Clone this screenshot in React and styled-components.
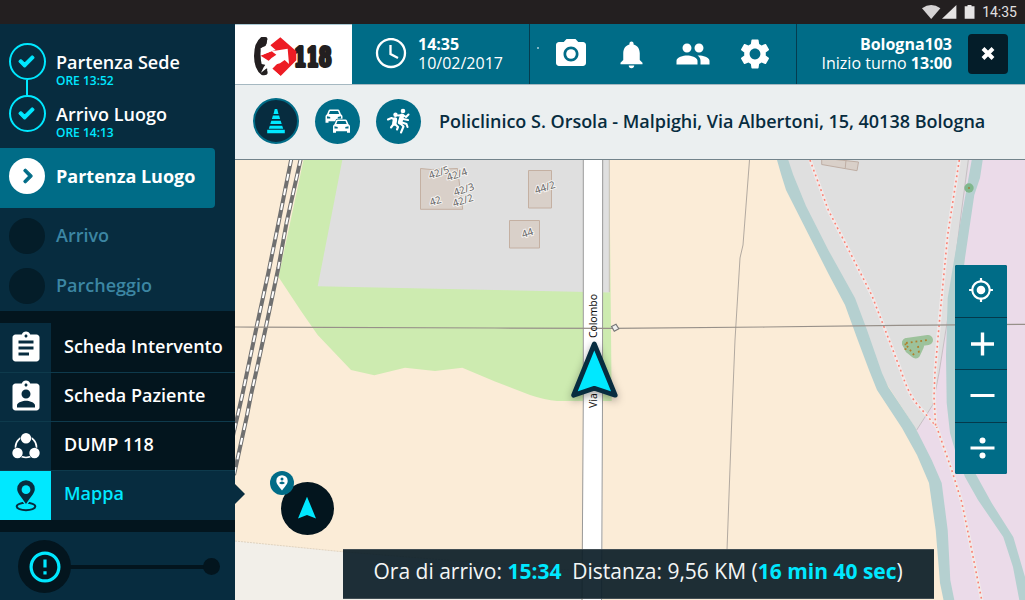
import React from "react";
import styled, { createGlobalStyle, css } from "styled-components";
import {
  MdAssignment,
  MdAssignmentInd,
  MdCameraAlt,
  MdNotifications,
  MdPeople,
  MdSettings,
  MdMyLocation,
} from "react-icons/md";
import { FaCheck, FaChevronRight } from "react-icons/fa";

const c = {
  navy: "#072c3f",
  black: "#03151e",
  deep: "#041d29",
  teal: "#006c87",
  cyan: "#00e8ff",
  dim: "#3c86a3",
  line: "#0e3a4c",
};

const GlobalStyle = createGlobalStyle`
  * { box-sizing: border-box; }
  body { margin: 0; overflow: hidden; font-family: "Open Sans", "Noto Sans", sans-serif; }
  svg { display: block; flex: none; }
`;

const Screen = styled.div`
  width: 1025px;
  height: 600px;
  display: flex;
  flex-direction: column;
  overflow: hidden;
`;

const StatusBar = styled.div`
  flex: none;
  height: 24px;
  background: #231f20;
  display: flex;
  justify-content: flex-end;
  align-items: center;
  padding-right: 8px;
  gap: 7px;
  color: #e2e0e0;
  font: 14px/24px Roboto, sans-serif;
`;

const Body = styled.div`
  flex: 1;
  min-height: 0;
  display: flex;
`;

/* ---------- sidebar ---------- */

const Sidebar = styled.aside`
  position: relative;
  z-index: 2;
  width: 235px;
  flex: none;
  display: flex;
  flex-direction: column;
  background: ${c.black};
`;

const Steps = styled.div`
  height: 287px;
  padding-top: 19px;
  background: ${c.navy};
  display: flex;
  flex-direction: column;
`;

const Step = styled.div`
  display: flex;
  height: ${(p) => p.$h}px;
  width: 215px;
  padding-left: 8px;
  gap: ${(p) => (p.$done ? 10 : 11)}px;
  align-items: ${(p) => (p.$done ? "flex-start" : "center")};
  ${(p) => !p.$done && css`padding-left: 9px;`}
  ${(p) =>
    p.$active &&
    css`
      margin-top: 1px;
      padding-bottom: 4px;
      background: ${c.teal};
      border-radius: 0 4px 4px 0;
    `}
`;

const DoneTrack = styled.div`
  display: flex;
  flex-direction: column;
  align-items: center;
  width: 38px;
`;

const StepDot = styled.div`
  width: ${(p) => (p.$kind === "done" ? 37 : 36)}px;
  height: ${(p) => (p.$kind === "done" ? 37 : 36)}px;
  border-radius: 50%;
  display: flex;
  align-items: center;
  justify-content: center;
  ${(p) => p.$kind === "done" && css`border: 2px solid ${c.cyan}; color: ${c.cyan}; padding-right: 2px;`}
  ${(p) => p.$kind === "active" && css`background: #fff; color: ${c.teal}; padding-left: 2px;`}
  ${(p) => p.$kind === "todo" && css`background: ${c.deep};`}
  svg { overflow: visible; stroke: currentColor; stroke-width: 36px; }
`;

const Connector = styled.div`
  width: 2px;
  height: 15px;
  background: ${c.cyan};
`;

const StepText = styled.div`
  padding-top: ${(p) => p.$top || 0}px;
  display: flex;
  flex-direction: column;
`;

const StepName = styled.span`
  font-size: 18px;
  line-height: 24px;
  font-weight: ${(p) => (p.$bold ? 700 : 600)};
  color: ${(p) => (p.$dim ? c.dim : "#fff")};
  margin-bottom: ${(p) => (p.$dim ? 2 : 0)}px;
  white-space: nowrap;
`;

const StepTime = styled.span`
  font-size: 12px;
  line-height: 13px;
  font-weight: 600;
  color: ${c.cyan};
`;

const Menu = styled.nav`
  margin-top: 12px;
  display: flex;
  flex-direction: column;
`;

const MenuLabel = styled.span`
  padding-left: 13px;
  font-size: 18px;
  line-height: 45px;
  font-weight: 600;
  white-space: nowrap;
`;

const MenuRow = styled.div`
  position: relative;
  display: flex;
  height: 49px;
  border-bottom: ${(p) => (p.$active ? "none" : `1px solid ${c.line}`)};
  background: ${(p) => (p.$active ? c.navy : "transparent")};
  color: ${(p) => (p.$active ? c.cyan : "#fff")};
  &:first-child {
    height: 50px;
    ${MenuLabel} { line-height: 47px; }
  }
  ${(p) =>
    p.$active &&
    css`
      &::after {
        content: "";
        position: absolute;
        left: 235px;
        top: 13px;
        border: 10.5px solid transparent;
        border-left-color: ${c.navy};
        border-right-width: 0;
      }
    `}
`;

const MenuIcon = styled.div`
  width: 51px;
  display: flex;
  align-items: center;
  justify-content: center;
  color: ${(p) => (p.$active ? c.navy : "#fff")};
  background: ${(p) => (p.$active ? c.cyan : c.navy)};
`;

const SlideBar = styled.div`
  margin-top: 12px;
  flex: 1;
  background: ${c.navy};
  display: flex;
  align-items: center;
  padding: 1px 0 0 18px;
`;

const AlertKnob = styled.div`
  width: 53px;
  height: 53px;
  border-radius: 50%;
  background: ${c.black};
  display: flex;
  align-items: center;
  justify-content: center;
`;

const Track = styled.div`
  width: 134px;
  height: 4px;
  background: ${c.black};
  margin: 0 -1px;
`;

const TrackEnd = styled.div`
  width: 17px;
  height: 17px;
  border-radius: 50%;
  background: ${c.black};
`;

/* ---------- header ---------- */

const Main = styled.main`
  flex: 1;
  min-width: 0;
  display: flex;
  flex-direction: column;
`;

const Header = styled.header`
  flex: none;
  height: 60px;
  display: flex;
  background: ${c.teal};
  color: #fff;
`;

const LogoBox = styled.div`
  width: 117px;
  background: #fff;
  border-top: 1px solid #a9c9d4;
`;

const ClockBox = styled.div`
  width: 178px;
  border-right: 1px solid #053c4f;
  display: flex;
  align-items: center;
  padding-left: 23px;
  gap: 11px;
`;

const TwoLines = styled.div`
  display: flex;
  flex-direction: column;
  font-size: 16px;
  line-height: 19.5px;
  white-space: nowrap;
  text-align: ${(p) => (p.$right ? "right" : "left")};
`;

const Tools = styled.div`
  position: relative;
  width: 267px;
  border-right: 1px solid #053c4f;
  display: flex;
  align-items: center;
  padding-left: 23px;
  gap: 26.4px;
  &::before {
    content: "";
    position: absolute;
    left: 7px;
    top: 23px;
    width: 2px;
    height: 2px;
    background: #7fb5c3;
  }
`;

const Shift = styled.div`
  flex: 1;
  display: flex;
  align-items: center;
  justify-content: flex-end;
  gap: 16px;
  padding-right: 17px;
`;

const CloseButton = styled.div`
  width: 40px;
  height: 40px;
  border-radius: 4px;
  background: ${c.deep};
  display: flex;
  align-items: center;
  justify-content: center;
`;

const AddressBar = styled.div`
  flex: none;
  height: 76px;
  background: #ebeff0;
  border-top: 1px solid #a5b8c1;
  border-bottom: 1px solid #72838b;
  display: flex;
  align-items: center;
  padding: 0 0 2px 18px;
  gap: 16px;
`;

const RoundButton = styled.div`
  width: ${(p) => (p.$selected ? 46 : 45)}px;
  height: ${(p) => (p.$selected ? 46 : 45)}px;
  border-radius: 50%;
  background: ${(p) => (p.$selected ? c.navy : c.teal)};
  border: ${(p) => (p.$selected ? `2px solid ${c.teal}` : "none")};
  display: flex;
  align-items: center;
  justify-content: center;
`;

const Address = styled.span`
  margin-left: 2px;
  font-size: 18px;
  line-height: 24px;
  letter-spacing: -0.01px;
  font-weight: 600;
  color: ${c.navy};
  white-space: nowrap;
`;

/* ---------- map ---------- */

const MapArea = styled.section`
  position: relative;
  flex: 1;
  min-height: 0;
  overflow: hidden;
`;

const Controls = styled.div`
  position: absolute;
  right: 18px;
  top: 105px;
  width: 52px;
  border-radius: 2px;
  overflow: hidden;
  display: flex;
  flex-direction: column;
  gap: 1px;
  background: #04394b;
`;

const ControlButton = styled.div`
  height: 51.5px;
  padding-bottom: ${(p) => p.$lift || 0}px;
  background: ${c.teal};
  color: #fff;
  display: flex;
  align-items: center;
  justify-content: center;
`;

const Locate = styled.div`
  position: absolute;
  left: 45.5px;
  top: 322px;
  width: 53px;
  height: 53px;
  border-radius: 50%;
  background: ${c.black};
  display: flex;
  align-items: center;
  justify-content: center;
`;

const LocateBadge = styled.div`
  position: absolute;
  left: -10.5px;
  top: -11px;
  width: 24px;
  height: 24px;
  border-radius: 50%;
  background: ${c.teal};
  display: flex;
  align-items: center;
  justify-content: center;
`;

const EtaBar = styled.div`
  position: absolute;
  left: 107.5px;
  top: 389px;
  width: 591.5px;
  height: 50px;
  background: rgba(11, 29, 39, 0.92);
  border: 1px solid rgba(90, 100, 105, 0.6);
  border-width: 1px 0;
  padding-left: 31px;
  color: #f4f6f6;
  font-size: 21px;
  line-height: 43px;
  white-space: pre;
  b { color: ${c.cyan}; }
`;

/* ---------- drawings ---------- */

const Logo = () => (
  <svg width="117" height="59" viewBox="0 15 351 177">
    <path d="M78 52Q97 48 97 57L94 72Q92 80 84 80L80 83Q74 108 80 132L90 134Q95 136 96 143L98 159Q96 168 80 165Q57 148 57 108Q57 68 78 52z" fill="#231f20" />
    <text x="177" y="138" textLength="112" lengthAdjust="spacingAndGlyphs" fontFamily="DejaVu Serif, serif" fontWeight="700" fontSize="80" fill="#231f20" stroke="#231f20" strokeWidth="12" strokeLinejoin="round">118</text>
    <path d="M106 76L136 52 184 94V121L137 168 112 146 134 124 103 124 77 107 112 92z" fill="#ed1c24" />
    <path d="M78 158Q92 122 124 104L110 94 158 86 162 132 149 120 135 130Q100 138 78 158zM77 84L106 76 122 90 112 93 77 106zM96 150L112 146 137 169 118 172z" fill="#fff" />
    <path d="M78 52Q97 48 97 57L94 72Q92 80 84 80L80 83L72 80z" fill="#231f20" />
  </svg>
);

const DumpIcon = () => (
  <svg width="30" height="30" viewBox="0 0 30 30">
    <circle cx="15" cy="16" r="10.5" fill="none" stroke="#fff" strokeWidth="1.6" />
    <g fill="#fff" stroke={c.navy} strokeWidth="1.2" paintOrder="stroke">
      <circle cx="15" cy="7.2" r="5.2" />
      <circle cx="6.5" cy="22" r="5.2" />
      <circle cx="23.5" cy="22" r="5.2" />
    </g>
  </svg>
);

const PinIcon = () => (
  <svg width="24" height="32" viewBox="0 0 24 32">
    <ellipse cx="12" cy="26.5" rx="9.3" ry="3.7" fill="none" stroke={c.navy} strokeWidth="2" />
    <path d="M12 24C8 17.500 3.200 13.500 3.200 9a8.800 8.800 0 0 1 17.600 0C20.800 13.500 16 17.500 12 24z" fill={c.navy} stroke={c.cyan} strokeWidth="3" paintOrder="stroke" />
    <circle cx="12" cy="9.7" r="4.4" fill={c.cyan} />
  </svg>
);

const ConeIcon = () => (
  <svg width="20" height="26" viewBox="0 0 20 26" fill={c.cyan}>
    <path d="M8.800 1h2.400l1.300 5h-5zM6.900 7.600h6.200l1 3.300H5.900zM5.300 12.800h9.400l1 3.200H4.300zM3.800 17.700h12.400l1 3.100H2.800zM1.200 21.700h17.600v3.500H1.200z" />
  </svg>
);

const Car = ({ x, y }) => (
  <g transform={`translate(${x} ${y})`}>
    <path d="M3.700 1.200Q4 .4 5 .4h8q1 0 1.300.8l1.700 4q1.500.7 1.500 2.300v6.300h-3v-1.500h-11v1.500h-3V7.500q0-1.600 1.500-2.300z" fill="#fff" stroke={c.teal} strokeWidth="1.2" paintOrder="stroke" />
    <path d="M5 2h8l1.200 3H3.800zM2 7.300l3.200.7v1.600H2zM16 7.300l-3.200.7v1.600H16z" fill={c.teal} />
  </g>
);

const CarsIcon = () => (
  <svg width="27" height="26" viewBox="0 0 27 26">
    <Car x={1} y={1} />
    <Car x={8.5} y={11} />
  </svg>
);

const RunnersIcon = () => (
  <svg width="26" height="28" viewBox="0 0 26 28" fill="none" stroke="#fff" strokeLinecap="round" strokeLinejoin="round">
    <circle cx="17" cy="4" r="2.3" fill="#fff" stroke="none" />
    <circle cx="9.5" cy="7.8" r="2.2" fill="#fff" stroke="none" />
    <path d="M16 8.800L14 15.500M9 12.500L8.300 16.500" strokeWidth="4.4" />
    <path d="M2 12.500L5.500 11 9 12.500M8 16.500L5 20.500M9 17l3 3-1 2.500M12 8.500L17 8l3 2 2.500-2.500M17 12l5 1M14 16l3.500 3.500-2.500 6M16 15.500l4.500 1.500 1 3" strokeWidth="2.1" />
  </svg>
);

const StreetMap = () => (
  <svg width="790" height="440" viewBox="235 160 790 440">
    <rect x="235" y="160" width="790" height="440" fill="#fbecd7" />
    <path d="M235 541L342 551.700 582 571V600H235z" fill="#f2efe9" />
    <path d="M235 541L342 551.700 582 571" fill="none" stroke="#d9ccb8" strokeWidth=".8" strokeDasharray="2 1" />
    <path d="M303.500 160L278.500 277 301 311 317.700 335 351 370 374.300 375.300 405 367.700 435 371 462.300 367.700 495 381.500 530 395Q545 400 557 401H611.700L609.300 160z" fill="#cdebb0" />
    <path d="M342.300 160L317.700 286.300 495 290 609.300 292.500V160z" fill="#dfdfdf" />
    <path d="M609.300 160V292" stroke="#c8c0b8" strokeWidth="1" />

    <g fill="#d9d0c9" stroke="#c4b0a2" strokeWidth="1">
      <path d="M420.500 168.500L431 169.500 457.500 168.500 462.700 209.300H420.500z" />
      <path d="M528.500 170.500h23v37.500h-23zM509.500 220.500h30v27.500h-30z" />
    </g>

    <path d="M777 158L985 158 968 200 948 315 939 373 932.700 405 916.700 430 881 375 855 302 828 250z" fill="#dfdfdf" />
    <path d="M970 158H1025V600H950L945 530 930 470 916.700 430 932.700 405 939 373 948 315 961 215z" fill="#ebdbe9" />
    <path d="M968.300 160L961 215 948.300 315 939 373 932.700 405 916.700 430" fill="none" stroke="#c6bfc4" strokeWidth="1" />
    <path d="M821.700 158L858.500 162 857 170.700 821.700 164.500zM846 160l-.8 8.500" fill="#d9d0c9" stroke="#bfaea4" strokeWidth="1" />

    <path d="M777 160L781 174 786 190 828.300 273.500 845 305 857 338 869 370 877 390 902 428 917 455 929 483 935.700 530 940 583 943.500 600H954.300L950.300 580 947.700 530 941.700 483 931.700 460 915 427 888.300 387 882 373 867 330 855 298 828.300 250 806 206 793.300 175 788.300 160z" fill="#b5d0d0" />
    <path d="M971.700 160L966.700 188 960 225 947.700 298 946 355 946.700 403 950 433 957 457 965 477 978 500 1003.300 537 1013 567 1019.300 600H1031L1025 577 1013.300 537 991.700 503 975.700 474 966 450 958 400 957 340 960 300 965 258 974.300 195 980 178 982.700 160z" fill="#b5d0d0" />

    {["M810 160L828.300 210 871.700 295 883.300 325 901.700 373Q908 392 915 401.700L936.700 427 951.700 470 961.700 502 971.700 550 981.700 600", "M959.300 160L947.700 235 940 315 935 372 934 397 935.700 427"].map((d) => (
      <g key={d} fill="none">
        <path d={d} stroke="#f1eaea" strokeWidth="3.4" />
        <path d={d} stroke="#fa8072" strokeWidth="1.6" strokeDasharray="1.8 3.4" />
      </g>
    ))}

    <circle cx="969" cy="188" r="4.7" fill="#80b78d" />
    <circle cx="969" cy="188" r="1" fill="#a07b3c" />
    <path d="M907 343L928 340" stroke="#9dc29b" strokeWidth="10" strokeLinecap="round" />
    <path d="M907 343L910 349 915.500 353.500 919 346" fill="#9dc29b" stroke="#9dc29b" strokeWidth="10" strokeLinejoin="round" strokeLinecap="round" />
    <path d="M906 343L928 340M907 346L914 355M918 346l1 7M905.500 343.500v9" fill="none" stroke="#b07f2c" strokeWidth="1.8" strokeDasharray="1.8 3" />

    {["M291.300 159L277.700 227 268.300 273 257 325 242.300 395 230 449", "M300.700 159L286.700 222 278.300 268 265.700 328 257.700 365 251 395 246.700 417 234 475"].map((d) => (
      <g key={d} fill="none">
        <path d={d} stroke="#707070" strokeWidth="4" />
        <path d={d} stroke="#fff" strokeWidth="2" strokeDasharray="7 8" />
      </g>
    ))}

    <path d="M749.500 160L743 245 740 258 735 340 731.700 422 727 550" fill="none" stroke="#a9a29a" strokeWidth=".9" />
    <rect x="583" y="160" width="19.3" height="440" fill="#fff" />
    <path d="M583.300 160V400L582 600M602.700 160L602.500 400 601.600 600" fill="none" stroke="#999" strokeWidth="1" />
    <path d="M235 327L495 328 613 328.300 765 327 898 325.300 1025 324.300" fill="none" stroke="#979089" strokeWidth="1.2" />
    <path d="M611.500 326.500l4.500-2.200 2.800 4.500-4.500 2.500z" fill="#eee" stroke="#777" strokeWidth="1.2" />

    <g fontFamily="Noto Sans, sans-serif" fontSize="10" fill="#666" stroke="#f5f3f1" strokeWidth="2" paintOrder="stroke">
      {[["42/5", 430, 179], ["42/4", 448, 181], ["42/3", 455, 196], ["42/2", 454, 207], ["42", 431, 206], ["44/2", 536, 194], ["44", 523, 238]].map(([t, x, y]) => (
        <text key={t} transform={`translate(${x} ${y}) rotate(-18)`}>{t}</text>
      ))}
    </g>
    <g fontFamily="Noto Sans, sans-serif" fontSize="10.5" fill="#111">
      <text transform="translate(597.300 338) rotate(-90)" textLength="44">Colombo</text>
      <text transform="translate(597.300 408) rotate(-90)">Via</text>
    </g>
    <path d="M594.300 344L615.200 395.200 594.300 388.300 573.600 395.200z" fill={c.cyan} stroke={c.navy} strokeWidth="4.8" strokeLinejoin="round" filter="drop-shadow(0 3px 4px rgba(0,0,0,.35))" />
  </svg>
);

const upcoming = [
  { name: "Arrivo", h: 56 },
  { name: "Parcheggio", h: 43 },
];

const menu = [
  { label: "Scheda Intervento", icon: <MdAssignment size={36} /> },
  { label: "Scheda Paziente", icon: <MdAssignmentInd size={36} /> },
  { label: "DUMP 118", icon: <DumpIcon /> },
  { label: "Mappa", icon: <PinIcon />, active: true },
];

export default function App() {
  return (
    <Screen>
      <GlobalStyle />
      <StatusBar>
        <svg width="53" height="14" viewBox="0 0 53 14">
          <path d="M0 3.300Q9.200-3.300 18.400 3.300L9.200 14z" fill="#d5d2d3" />
          <path d="M34.400 0V13.700H20z" fill="#e6e4e4" />
          <path d="M45.500 0h4v1.300H52.500V13.700H42.700V1.300H45.500z" fill="#e6e4e4" />
        </svg>
        <span>14:35</span>
      </StatusBar>
      <Body>
        <Sidebar>
          <Steps>
            <Step $done $h={52}>
              <DoneTrack>
                <StepDot $kind="done"><FaCheck size={15} /></StepDot>
                <Connector />
              </DoneTrack>
              <StepText $top={7}>
                <StepName>Partenza Sede</StepName>
                <StepTime>ORE 13:52</StepTime>
              </StepText>
            </Step>
            <Step $done $h={52}>
              <DoneTrack>
                <StepDot $kind="done"><FaCheck size={15} /></StepDot>
              </DoneTrack>
              <StepText $top={7}>
                <StepName>Arrivo Luogo</StepName>
                <StepTime>ORE 14:13</StepTime>
              </StepText>
            </Step>
            <Step $active $h={60}>
              <StepDot $kind="active"><FaChevronRight size={16} /></StepDot>
              <StepName $bold>Partenza Luogo</StepName>
            </Step>
            {upcoming.map((s) => (
              <Step key={s.name} $h={s.h}>
                <StepDot $kind="todo" />
                <StepName $dim>{s.name}</StepName>
              </Step>
            ))}
          </Steps>
          <Menu>
            {menu.map((m) => (
              <MenuRow key={m.label} $active={m.active}>
                <MenuIcon $active={m.active}>{m.icon}</MenuIcon>
                <MenuLabel>{m.label}</MenuLabel>
              </MenuRow>
            ))}
          </Menu>
          <SlideBar>
            <AlertKnob>
              <svg width="32" height="32" viewBox="0 0 32 32">
                <circle cx="16" cy="16" r="13.9" fill="none" stroke={c.cyan} strokeWidth="3.2" />
                <path d="M14.400 8.500h3.200v8h-3.200zM14.400 20.200h3.200v3.300h-3.200z" fill={c.cyan} />
              </svg>
            </AlertKnob>
            <Track />
            <TrackEnd />
          </SlideBar>
        </Sidebar>
        <Main>
          <Header>
            <LogoBox><Logo /></LogoBox>
            <ClockBox>
              <svg width="32" height="32" viewBox="0 0 32 32" fill="none" stroke="#fff">
                <circle cx="16" cy="15" r="14" strokeWidth="2.3" />
                <path d="M15.500 7V16L23 20" strokeWidth="2.3" />
              </svg>
              <TwoLines>
                <b>14:35</b>
                <span>10/02/2017</span>
              </TwoLines>
            </ClockBox>
            <Tools>
              <MdCameraAlt size={36} />
              <MdNotifications size={33} />
              <MdPeople size={36} />
              <MdSettings size={36} />
            </Tools>
            <Shift>
              <TwoLines $right>
                <b>Bologna103</b>
                <span>Inizio turno <b>13:00</b></span>
              </TwoLines>
              <CloseButton>
                <svg width="14" height="14" viewBox="0 0 14 14">
                  <path d="M2 1.500l10 10M12 1.500L2 11.500" stroke="#fff" strokeWidth="4" />
                </svg>
              </CloseButton>
            </Shift>
          </Header>
          <AddressBar>
            <RoundButton $selected><ConeIcon /></RoundButton>
            <RoundButton><CarsIcon /></RoundButton>
            <RoundButton><RunnersIcon /></RoundButton>
            <Address>Policlinico S. Orsola - Malpighi, Via Albertoni, 15, 40138 Bologna</Address>
          </AddressBar>
          <MapArea>
            <StreetMap />
            <Controls>
              <ControlButton $lift={2}><MdMyLocation size={26} /></ControlButton>
              <ControlButton>
                <svg width="28" height="28" viewBox="0 0 28 28"><path d="M15.500 3.500v23M4 15h23" stroke="#fff" strokeWidth="3.4" /></svg>
              </ControlButton>
              <ControlButton $lift={2}>
                <svg width="28" height="28" viewBox="0 0 28 28"><path d="M3.500 14.500h24" stroke="#fff" strokeWidth="3" /></svg>
              </ControlButton>
              <ControlButton $lift={2}>
                <svg width="28" height="28" viewBox="0 0 28 28"><path d="M3.500 15h24" stroke="#fff" strokeWidth="2.8" /><circle cx="15.5" cy="7.5" r="3" fill="#fff" /><circle cx="15.5" cy="22.5" r="3" fill="#fff" /></svg>
              </ControlButton>
            </Controls>
            <Locate>
              <LocateBadge>
                <svg width="12" height="16" viewBox="0 0 12 16">
                  <path d="M6 15.500C3 11 .3 9 .3 5.900a5.700 5.700 0 0 1 11.400 0C11.700 9 9 11 6 15.500z" fill="#fff" />
                  <circle cx="6" cy="4" r="1.5" fill={c.teal} />
                  <path d="M3 8q3-3 6 0-3 2.600-6 0z" fill={c.teal} />
                </svg>
              </LocateBadge>
              <svg width="20" height="24" viewBox="0 0 20 24">
                <path d="M10 -.3L19 21.400 10 18 1 21.400z" fill={c.cyan} />
              </svg>
            </Locate>
            <EtaBar>
              Ora di arrivo: <b>15:34</b>{"  "}Distanza: 9,56 KM (<b>16 min 40 sec</b>)
            </EtaBar>
          </MapArea>
        </Main>
      </Body>
    </Screen>
  );
}
